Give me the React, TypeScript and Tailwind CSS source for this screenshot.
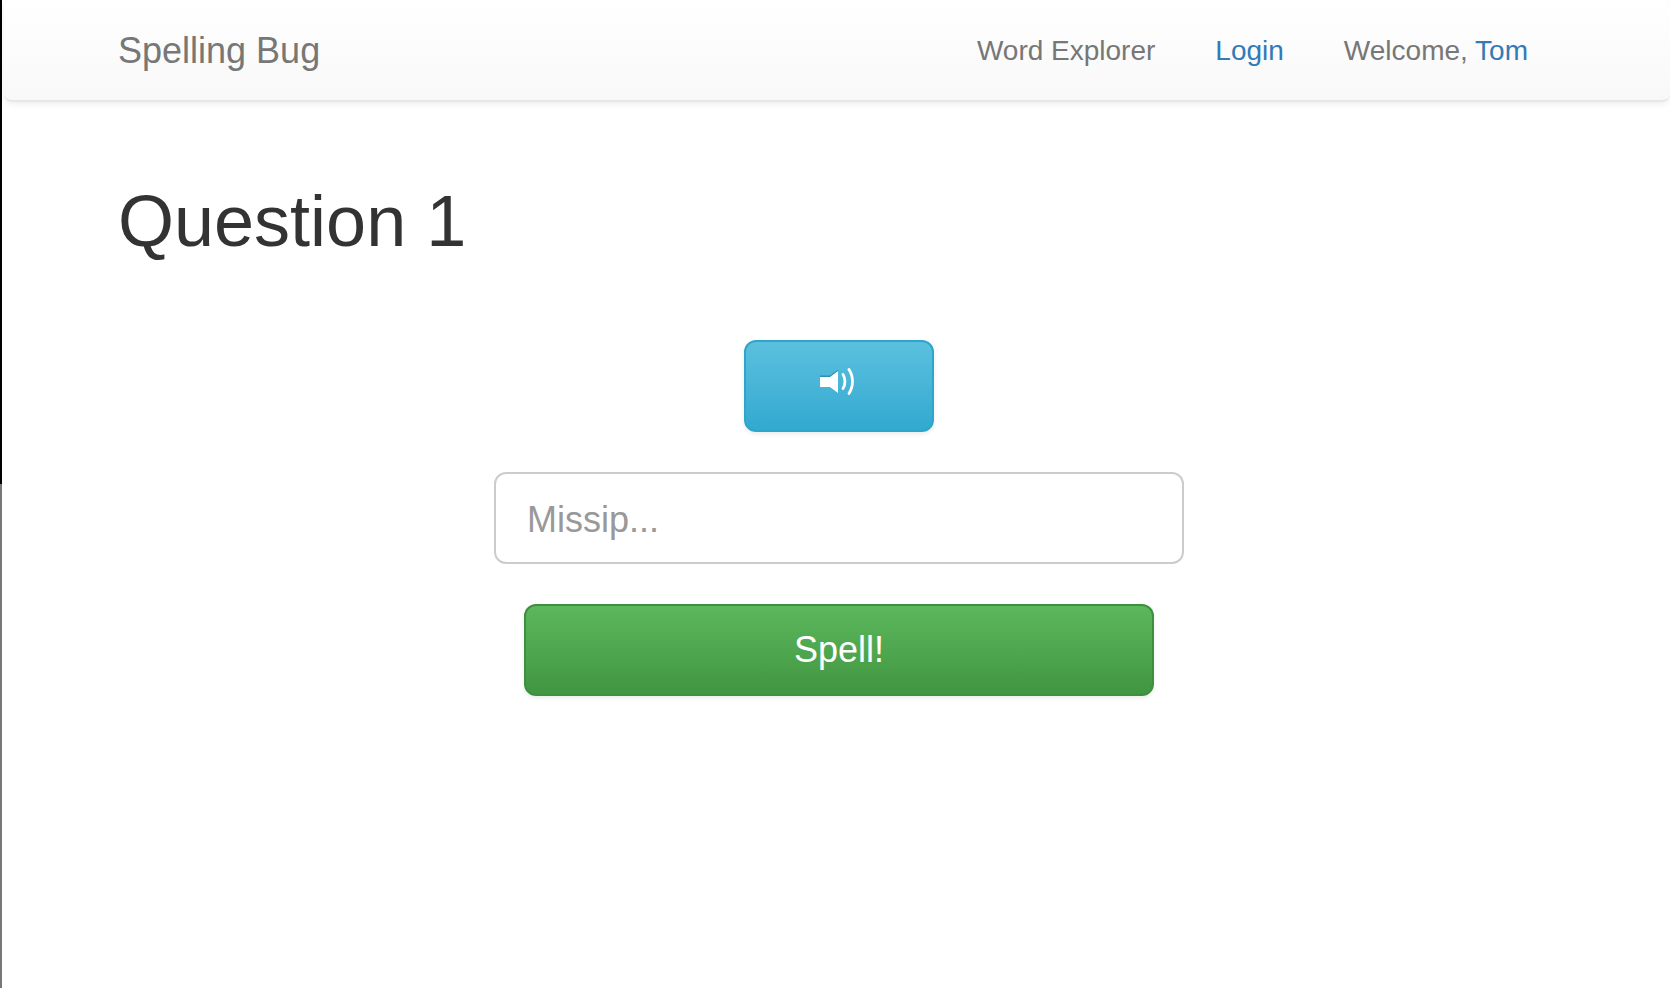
// Spelling quiz page
function SpeakerIcon() {
  return (
    <svg width="36" height="28" viewBox="0 0 36 28" fill="none" className="block">
      <path d="M1 9h10l8-6v23l-8-6H1z" fill="#fff" />
      <path d="M1 8.5h10l8-6v1.5l-8 6H1z" fill="#2f8fb0" />
      <path d="M24 7.5c2.6 4 2.6 10 0 14" stroke="#fff" strokeWidth="2.8" strokeLinecap="round" />
      <path d="M30 2.5c4.6 7 4.6 17 0 24" stroke="#fff" strokeWidth="2.8" strokeLinecap="round" />
    </svg>
  );
}

export default function App() {
  return (
    <div className="flex h-[988px] bg-white font-['Liberation_Sans',Arial,sans-serif] overflow-hidden">
      {/* window edge on the left */}
      <div className="flex w-[2px] shrink-0 flex-col">
        <div className="h-[484px] bg-black" />
        <div className="flex-1 bg-[#777]" />
      </div>

      <div className="flex min-w-0 flex-1 flex-col">
        <nav className="ml-[2px] flex h-[102px] shrink-0 items-center justify-between rounded-[8px] border-b-2 border-[#e7e7e7] bg-gradient-to-b from-white to-[#f8f8f8] pt-[1px] pl-[114px] pr-[142px] shadow-[0_2px_6px_rgba(0,0,0,0.07)]">
          <a className="text-[36px] leading-none text-[#777]">Spelling Bug</a>
          <div className="flex items-center gap-[60px] text-[28px] leading-none text-[#777]">
            <a>Word Explorer</a>
            <a className="text-[#337ab7]">Login</a>
            <span>
              Welcome, <a className="text-[#337ab7]">Tom</a>
            </span>
          </div>
        </nav>

        <main className="pl-[116px] pr-[110px]">
          <h1 className="mt-[80px] text-[72px] leading-[79px] font-normal text-[#333]">Question 1</h1>

          <div className="mt-[79px] flex flex-col items-center">
            <button className="flex h-[92px] w-[190px] items-start justify-center rounded-[12px] border-2 border-[#2ea6cb] bg-gradient-to-b from-[#5bc0de] to-[#31a9d0] pt-[25px] pr-[4px] shadow-[0_2px_4px_rgba(0,0,0,0.08)]">
              <SpeakerIcon />
            </button>

            <input
              placeholder="Missip..."
              className="mt-[40px] h-[92px] w-[690px] rounded-[12px] border-2 border-[#ccc] bg-white px-[31px] pt-[4px] text-[36px] text-[#555] placeholder:text-[#999] outline-none"
            />

            <button className="mt-[40px] h-[92px] w-[630px] rounded-[12px] border-2 border-[#3e8f3e] bg-gradient-to-b from-[#5cb85c] to-[#419641] text-[36px] text-white shadow-[0_2px_4px_rgba(0,0,0,0.08)]">
              Spell!
            </button>
          </div>
        </main>
      </div>
    </div>
  );
}
